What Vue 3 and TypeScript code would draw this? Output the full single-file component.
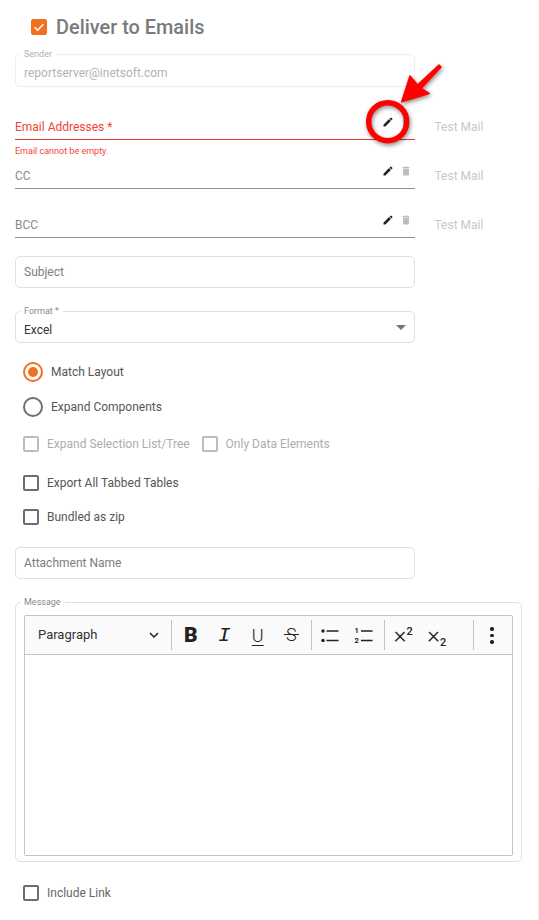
<script setup lang="ts">
interface MailRow { label: string; error?: string; required?: boolean }
const rows: MailRow[] = [
  { label: 'Email Addresses *', error: 'Email cannot be empty.', required: true },
  { label: 'CC' },
  { label: 'BCC' },
]
const pencil = 'M3 17.25V21h3.75L17.81 9.94l-3.75-3.75L3 17.25zM20.71 7.04a1 1 0 0 0 0-1.41l-2.34-2.34a1 1 0 0 0-1.41 0l-1.83 1.83 3.75 3.75 1.83-1.83z'
const trash = 'M6 19c0 1.1.9 2 2 2h8c1.1 0 2-.9 2-2V7H6v12zM19 4h-3.5l-1-1h-5l-1 1H5v2h14V4z'
</script>

<template>
  <div class="page">
    <div class="heading">
      <span class="box checked">
        <svg viewBox="0 0 16 16" width="16" height="16"><path d="M3.6 8.2l3 3 5.8-6" fill="none" stroke="#fff" stroke-width="1.5" /></svg>
      </span>
      <span class="heading-text">Deliver to Emails</span>
    </div>

    <div class="outlined sender">
      <span class="legend">Sender</span>
      <span class="value muted">reportserver@inetsoft.com</span>
    </div>

    <div class="mail-rows">
      <div v-for="row in rows" :key="row.label" class="mail-row">
        <div class="line" :class="{ invalid: row.required }">
          <span class="line-label">{{ row.label }}</span>
          <svg class="ico" viewBox="0 0 24 24" width="12" height="12"><path :d="pencil" fill="#212121" /></svg>
          <svg class="ico trash" viewBox="0 0 24 24" width="12" height="12"><path :d="trash" fill="#bdbdbd" /></svg>
        </div>
        <span class="test">Test Mail</span>
        <div v-if="row.error" class="error">{{ row.error }}</div>
      </div>
    </div>

    <div class="outlined subject">
      <span class="value placeholder">Subject</span>
    </div>

    <div class="outlined format">
      <span class="legend">Format *</span>
      <span class="value dark">Excel</span>
      <span class="caret"></span>
    </div>

    <div class="radio first">
      <span class="ring on"><span class="dot"></span></span>
      <span class="opt">Match Layout</span>
    </div>
    <div class="radio second">
      <span class="ring"></span>
      <span class="opt">Expand Components</span>
    </div>

    <div class="checks disabled">
      <span class="box"></span><span class="opt">Expand Selection List/Tree</span>
      <span class="box next"></span><span class="opt">Only Data Elements</span>
    </div>
    <div class="checks tabbed">
      <span class="box"></span><span class="opt">Export All Tabbed Tables</span>
    </div>
    <div class="checks zip">
      <span class="box"></span><span class="opt">Bundled as zip</span>
    </div>

    <div class="outlined attachment">
      <span class="value placeholder">Attachment Name</span>
    </div>

    <div class="outlined message">
      <span class="legend">Message</span>
      <div class="editor">
        <div class="toolbar">
          <div class="dropdown">
            <span>Paragraph</span>
            <svg viewBox="0 0 10 6" width="10" height="6"><path d="M1 1l4 4 4-4" fill="none" stroke="#212121" stroke-width="1.5" /></svg>
          </div>
          <i class="sep"></i>
          <span class="tool t-b">B</span>
          <span class="tool t-i">I</span>
          <span class="tool t-u">U</span>
          <span class="tool"><span class="t-s">S</span></span>
          <i class="sep mid-a"></i>
          <span class="tool">
            <svg viewBox="0 0 18 14" width="18" height="14">
              <circle cx="2" cy="3" r="1.7" fill="#212121" /><circle cx="2" cy="12.500" r="1.7" fill="#212121" />
              <path d="M5.500 3h12M5.500 12.500h12" stroke="#212121" stroke-width="1.4" />
            </svg>
          </span>
          <span class="tool nums">
            <span class="num-col"><b>1</b><b>2</b></span>
            <svg viewBox="0 0 12 14" width="12" height="14"><path d="M0 3h11.500M0 12.500h11.500" stroke="#212121" stroke-width="1.4" /></svg>
          </span>
          <i class="sep mid-b"></i>
          <span class="tool script"><span>×<sup>2</sup></span></span>
          <span class="tool script"><span>×<sub>2</sub></span></span>
          <i class="sep last"></i>
          <span class="kebab"><i></i><i></i><i></i></span>
        </div>
        <div class="editor-body"></div>
      </div>
    </div>

    <div class="checks link">
      <span class="box"></span><span class="opt">Include Link</span>
    </div>

    <svg class="callout" viewBox="0 0 539 920" width="539" height="920">
      <circle cx="387.7" cy="121.7" r="19" fill="none" stroke="#fe0000" stroke-width="5.5" />
      <path d="M401.7 101.7L410 76l7.5 9 21.5-20 2 2-20 21.500 8 5z" fill="#fe0000" stroke="#fe0000" stroke-width="1.500" stroke-linejoin="round" />
    </svg>
    <div class="edge"></div>
  </div>
</template>

<style>
html, body { margin: 0; background: #fff; }
</style>

<style scoped>
.page {
  position: relative;
  width: 539px;
  height: 920px;
  overflow: hidden;
  background: #fff;
  padding: 19px 0 0 15px;
  box-sizing: border-box;
  font-family: Roboto, "Liberation Sans", sans-serif;
  font-size: 12px;
  color: #212121;
}
.heading { display: flex; align-items: center; height: 16px; padding-left: 16px; }
.heading-text { margin-left: 9px; padding-top: 1px; font-size: 19.900px; font-weight: 500; color: #7a7a7a; line-height: 16px; }
.box {
  flex: none;
  display: block;
  width: 16px;
  height: 16px;
  box-sizing: border-box;
  border: 2px solid #6e6e6e;
  border-radius: 2px;
}
.box.checked { background: #f37021; border: 0; }
.box.checked svg { display: block; }
.outlined {
  position: relative;
  box-sizing: border-box;
  width: 400px;
  height: 32px;
  border: 1px solid #e0e0e0;
  border-radius: 5px;
  display: flex;
  align-items: center;
  padding: 0 8px;
}
.legend {
  position: absolute;
  left: 4px;
  top: -6px;
  padding: 0 4px;
  background: #fff;
  font-size: 9px;
  line-height: 11px;
  color: #8a8a8a;
}
.value { font-size: 12px; }
.muted { color: #b3b3b3; }
.placeholder { color: #7d7d7d; }
.dark { color: #333; padding-top: 5px; }
.sender { margin-top: 19px; height: 33px; border-color: #eeeeee; }
.sender .legend { color: #b0b0b0; }
.sender .value { padding-top: 4px; }
.mail-rows { margin-top: 28px; }
.mail-row { position: relative; display: flex; align-items: flex-end; height: 49px; }
.mail-row:first-child { height: 25px; }
.line {
  position: relative;
  box-sizing: border-box;
  width: 400px;
  height: 25px;
  border-bottom: 1px solid #8f8f8f;
  display: flex;
  align-items: flex-start;
}
.line-label { flex: 1; font-size: 12px; line-height: 24px; color: #8a8a8a; }
.line.invalid { border-bottom-color: #e53935; }
.invalid .line-label { color: #f44336; }
.ico { flex: none; margin: 1px 0 0 0; }
.trash { margin-left: 6px; margin-right: 3px; }
.test { margin-left: 19.500px; margin-bottom: 6px; font-size: 12px; line-height: 14px; color: #c8c8c8; }
.error {
  position: absolute;
  left: 0;
  top: 30px;
  font-size: 9px;
  line-height: 12px;
  color: #f44336;
}
.subject { margin-top: 18px; }
.format { margin-top: 23px; }
.caret {
  position: absolute;
  right: 8px;
  top: 13px;
  width: 0;
  height: 0;
  border-left: 5.500px solid transparent;
  border-right: 5.500px solid transparent;
  border-top: 5.500px solid #757575;
}
.radio { display: flex; align-items: center; height: 20px; padding-left: 8px; }
.radio.first { margin-top: 19px; }
.radio.second { margin-top: 15px; }
.ring {
  flex: none;
  box-sizing: border-box;
  width: 20px;
  height: 20px;
  border: 2px solid #6e6e6e;
  border-radius: 50%;
  display: flex;
  align-items: center;
  justify-content: center;
}
.ring.on { border-color: #f37021; }
.dot { width: 10px; height: 10px; border-radius: 50%; background: #f37021; }
.radio .opt { margin-left: 8px; }
.opt { font-size: 12px; line-height: 16px; color: #555; }
.checks { display: flex; align-items: center; height: 16px; padding-left: 8px; }
.checks .opt { margin-left: 8px; }
.checks .next { margin-left: 12px; }
.disabled { margin-top: 19px; }
.disabled .box { border-color: #bdbdbd; }
.disabled .opt { color: #adadad; }
.tabbed { margin-top: 23px; }
.zip { margin-top: 18px; }
.attachment { margin-top: 22px; }
.message { margin-top: 23px; width: 507px; height: 260px; padding: 12px 8px 5px; display: block; }
.editor {
  box-sizing: border-box;
  height: 100%;
  border: 1px solid #c4c4c4;
  border-radius: 2px;
  display: flex;
  flex-direction: column;
}
.toolbar {
  flex: none;
  box-sizing: border-box;
  height: 39px;
  background: #fafafa;
  border-bottom: 1px solid #c4c4c4;
  display: flex;
  align-items: center;
}
.dropdown {
  flex: none;
  box-sizing: border-box;
  width: 146px;
  padding: 0 12px 1px 13px;
  display: flex;
  align-items: center;
  justify-content: space-between;
  font-size: 13px;
  color: #333;
}
.sep { flex: none; width: 1px; height: 30px; margin-right: 2px; background: #c4c4c4; }
.sep.mid-a { margin-left: 2.500px; }
.sep.mid-b { margin-left: 3px; }
.sep.last { margin-left: 19px; margin-right: 0; }
.tool {
  flex: none;
  width: 33.500px;
  display: flex;
  align-items: center;
  justify-content: center;
  color: #212121;
}
.t-b { font-size: 21px; font-weight: 900; }
.t-i { font-family: "Liberation Mono", monospace; font-style: italic; font-size: 21px; }
.t-u { font-size: 18px; font-weight: 300; text-decoration: underline; text-underline-offset: 3px; }
.t-s { position: relative; font-size: 18px; font-weight: 300; line-height: 20px; }
.t-s::after { content: ""; position: absolute; left: -2px; right: -2px; top: 9px; height: 1px; background: #212121; }
.nums { gap: 2px; }
.num-col { display: flex; flex-direction: column; gap: 3px; font-size: 7.500px; line-height: 7px; }
.num-col b { font-weight: 700; }
.script { font-size: 24px; font-weight: 300; line-height: 24px; }
.script sup, .script sub { font-size: 11px; font-weight: 500; line-height: 0; }
.script sup { vertical-align: 8px; }
.script sub { vertical-align: -3px; }
.kebab { margin: 1px 0 0 16.500px; display: flex; flex-direction: column; gap: 3px; }
.kebab i { display: block; width: 3.500px; height: 3.500px; border-radius: 50%; background: #212121; }
.editor-body { flex: 1; background: #fff; }
.link { margin-top: 23px; }
.link .opt { color: #666; }
.callout { position: absolute; left: 0; top: 0; pointer-events: none; filter: drop-shadow(1px 2px 2px rgba(0, 0, 0, 0.45)); }
.edge { position: absolute; left: 538px; top: 490px; width: 1px; height: 430px; background: #eeeeee; }
</style>
